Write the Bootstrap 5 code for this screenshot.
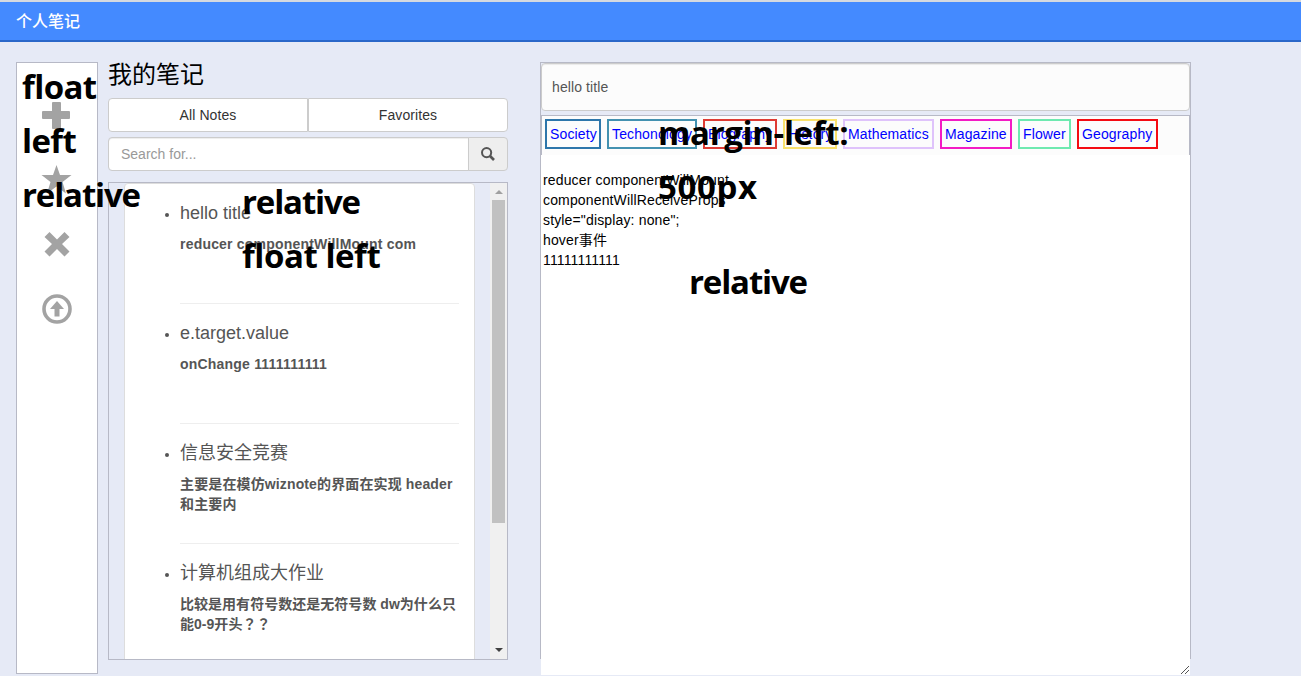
<!DOCTYPE html>
<html lang="zh">
<head>
<meta charset="utf-8">
<meta name="viewport" content="width=device-width, initial-scale=1">
<title>个人笔记</title>
<link href="https://cdn.jsdelivr.net/npm/bootstrap@5.3.0/dist/css/bootstrap.min.css" rel="stylesheet">
<style>
  body { height: 676px; background: #e6eaf6; color: #000; font: 14px/20px "Liberation Sans", "Noto Sans CJK SC", sans-serif; overflow: hidden; }
  .topbar { height: 42px; background: #448aff; border-top: 2px solid #d5d9e0; border-bottom: 2px solid #2a67c9; padding: 0 16px; }
  .brand { font-size: 16px; line-height: 40px; color: #fff; font-weight: 500; }
  .workspace { height: 634px; padding: 20px 0 0 16px; }
  .tools { width: 82px; height: 612px; border: 1px solid #b7b9c6; background: #fff; padding-top: 38px; gap: 34px; }
  .tools svg { width: 30px; height: 30px; fill: #a3a3a3; display: block; overflow: visible; }
  .notes { width: 400px; margin-left: 10px; }
  .heading { font-size: 24px; line-height: 26px; margin: 0 0 10px; font-weight: 400; }
  .tabs .btn { --bs-btn-font-size: 14px; --bs-btn-line-height: 20px; --bs-btn-bg: #fff; --bs-btn-color: #333; --bs-btn-border-color: #ccc; --bs-btn-border-radius: 4px; height: 34px; width: 200px; padding: 6px; margin: 0 !important; letter-spacing: .1px; }
  .search { margin-top: 5px; height: 34px; }
  .search .form-control { font-size: 14px; line-height: 20px; border-color: #ccc; border-radius: 4px; padding: 6px 12px; box-shadow: inset 0 1px 1px rgba(0,0,0,.075); }
  .search .form-control::placeholder { color: #999; }
  .search .input-group-text { width: 40px; padding: 0; background: #eee; border-color: #ccc; border-radius: 4px; justify-content: center; }
  .listbox { margin-top: 11px; height: 478px; border: 1px solid #b7b9c6; overflow: hidden; padding-left: 15px; }
  .sheet { width: 351px; height: 520px; background: #fff; border: 1px solid #ddd; border-radius: 4px; padding: 0 15px; color: #555; }
  .sheet ul { padding-left: 40px; margin: 0; }
  .sheet li { height: 120px; border-bottom: 1px solid #eee; padding-top: 19px; }
  .sheet li h4 { font-size: 18px; line-height: 20px; margin: 0 0 11px; font-weight: 400; }
  .sheet li p { font-weight: 700; margin: 0; letter-spacing: .2px; white-space: nowrap; }
  .sheet li p.cjk { letter-spacing: .03px; }
  .sheet li p.mixed { letter-spacing: .13px; }
  .wide-mark { font-family: "Noto Sans CJK TC", sans-serif; line-height: 1; }
  .scroller { width: 17px; margin-left: 15px; background: #f0f0f0; padding: 7px 2px 7px; }
  .thumb { width: 13px; height: 323px; background: #c1c1c1; margin-top: 6px; }
  .arrow { border: 4px solid transparent; border-top: 0; width: 0; height: 0; }
  .arrow-up { border-bottom: 4px solid #a0a0a0; }
  .arrow-down { border-top: 4px solid #404040; border-bottom: 0; }
  .editor { width: 651px; height: 597px; margin-left: 32px; border: 1px solid #b7b9c6; border-bottom: 0; }
  .title-input { height: 48px; flex: none; border: 1px solid #ccc; border-radius: 4px; background: #fcfcfc; color: #555; padding: 6px 10px; font-size: 14px; letter-spacing: .1px; box-shadow: inset 0 1px 1px rgba(0,0,0,.075); }
  .tags { height: 40px; flex: none; margin-top: 4px; border: 1px solid #b7b9c6; border-bottom: 0; background: #fcfcfc; padding: 3px; gap: 6px; }
  .tags a { height: 30px; line-height: 26px; padding: 0 3px; border: 2px solid; color: #00f; text-decoration: none; letter-spacing: .13px; white-space: nowrap; }
  .editor textarea { height: 520px; flex: none; width: 649px; border: 0; padding: 15px 2px; font: inherit; letter-spacing: .15px; color: #000; background: #fff; resize: none; display: block; outline: 0; overflow: hidden; }
  .grip { position: absolute; right: 1px; bottom: 1px; }
  .label { position: absolute; font: 700 33px/54px "Open Sans", "Noto Sans", sans-serif; white-space: nowrap; pointer-events: none; }
  .label-tools { left: 22px; top: 60px; letter-spacing: -.6px; }
  .label-list { left: 242px; top: 175px; letter-spacing: -.45px; }
  .label-editor { left: 658px; top: 106px; letter-spacing: -.35px; }
  .label-position { left: 689px; top: 255px; }
  .snug { letter-spacing: -1.15px; }
  .loose { letter-spacing: .6px; }
</style>
</head>
<body class="position-relative">
<header class="topbar"><div class="brand">个人笔记</div></header>
<main class="workspace d-flex align-items-start">
  <aside class="tools d-flex flex-column align-items-center">
    <svg viewBox="0 0 30 30"><path d="M11 1h7q1 0 1 1v8h8q1 0 1 1v6q0 1-1 1h-8v9q0 1-1 1h-7q-1 0-1-1v-9H1q-1 0-1-1v-6q0-1 1-1h9V2q0-1 1-1z"/></svg>
    <svg viewBox="0 0 30 30"><path d="M14.500 0l3.500 10h11.500L20.500 17l3.500 11.500-9.500-7L5 28.500 8.500 17-.5 10H11z"/></svg>
    <svg viewBox="0 0 30 30"><path d="M7.500 3L15 10.500 22.500 3l5 5L20 15l7.500 7.500-5 5L15 20l-7.500 7.500-5-5L10 15 2.500 8z"/></svg>
    <svg viewBox="0 0 30 30"><circle cx="15" cy="16" r="13" fill="none" stroke="#a3a3a3" stroke-width="3.600"/><path d="M15 8l7 8h-4.500v7.500h-5V16H8z"/></svg>
  </aside>
  <section class="notes">
    <h3 class="heading">我的笔记</h3>
    <div class="tabs btn-group d-flex"><button class="btn" type="button">All Notes</button><button class="btn" type="button">Favorites</button></div>
    <div class="search input-group">
      <input class="form-control" type="text" placeholder="Search for..." aria-label="Search">
      <span class="input-group-text"><svg width="14" height="14" viewBox="0 0 14 14" fill="none" stroke="#555"><circle cx="5.600" cy="5.600" r="4.600" stroke-width="2"/><path d="M9 9l4 4" stroke-width="2.600"/></svg></span>
    </div>
    <div class="listbox d-flex">
      <div class="sheet flex-shrink-0">
        <ul>
          <li><h4>hello title</h4><p>reducer componentWillMount com</p></li>
          <li><h4>e.target.value</h4><p>onChange 1111111111</p></li>
          <li><h4>信息安全竞赛</h4><p class="mixed">主要是在模仿wiznote的界面在实现 header<br>和主要内</p></li>
          <li><h4>计算机组成大作业</h4><p class="cjk">比较是用有符号数还是无符号数 dw为什么只<br>能0-9开头<span class="wide-mark" lang="zh-TW">？？</span></p></li>
        </ul>
      </div>
      <div class="scroller d-flex flex-column align-items-center">
        <span class="arrow arrow-up"></span><div class="thumb"></div><span class="arrow arrow-down mt-auto"></span>
      </div>
    </div>
  </section>
  <section class="editor d-flex flex-column">
    <input class="title-input" type="text" value="hello title" aria-label="Title">
    <nav class="tags d-flex align-items-start">
      <a href="#" style="border-color:#2d76ab;width:56px">Society</a>
      <a href="#" style="border-color:#4391b0;width:90px">Techonology</a>
      <a href="#" style="border-color:#de3b34;width:74px">Biography</a>
      <a href="#" style="border-color:#f8e16c;width:54px">History</a>
      <a href="#" style="border-color:#dfc3fb;width:91px">Mathematics</a>
      <a href="#" style="border-color:#f31bc4;width:72px">Magazine</a>
      <a href="#" style="border-color:#6ee9b0;width:53px">Flower</a>
      <a href="#" style="border-color:#f40b12;width:81px">Geography</a>
    </nav>
    <div class="position-relative">
      <textarea spellcheck="false" aria-label="Note">reducer componentWillMount
componentWillReceiveProps
style="display: none";
hover事件
11111111111</textarea>
      <svg class="grip" width="8" height="8" viewBox="0 0 8 8" stroke="#555"><path d="M0 8L8 0M4 8l4-4"/></svg>
    </div>
  </section>
</main>
<div class="label label-tools">float<br>left<br><span class="snug">relative</span></div>
<div class="label label-list"><span class="snug">relative</span><br>float left</div>
<div class="label label-editor">margin-left:<br><span class="loose">500px</span></div>
<div class="label label-position"><span class="snug">relative</span></div>
<script src="https://cdn.jsdelivr.net/npm/bootstrap@5.3.0/dist/js/bootstrap.bundle.min.js"></script>
</body>
</html>
